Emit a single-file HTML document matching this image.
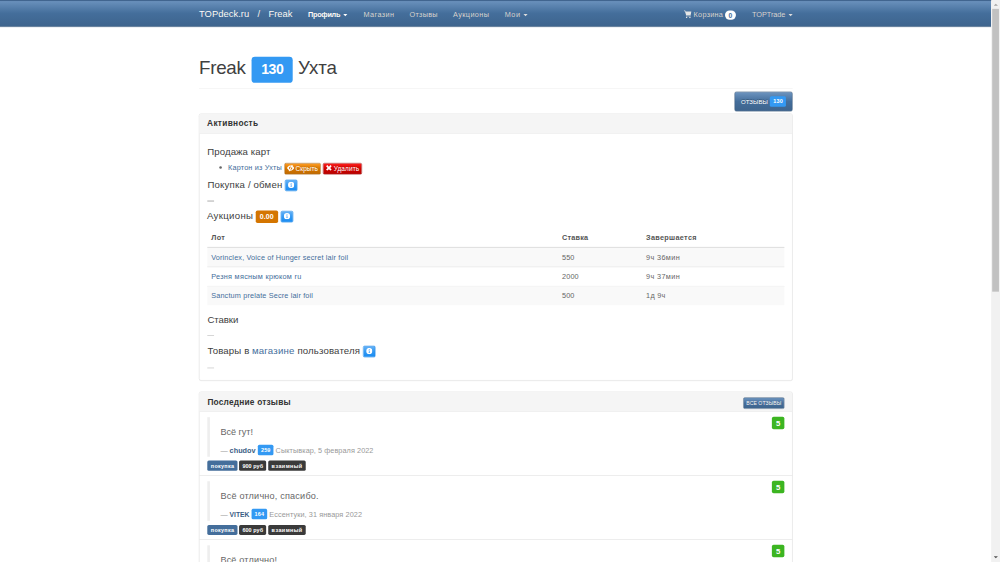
<!DOCTYPE html>
<html lang="ru"><head><meta charset="utf-8"><title>Freak - TOPdeck.ru</title>
<style>
html,body{margin:0;padding:0;background:#fff;}
body{width:1000px;height:562px;overflow:hidden;position:relative;font-family:"Liberation Sans",sans-serif;}
#stage{position:absolute;left:0;top:0;width:1920px;height:1080px;transform-origin:0 0;transform:scale(0.520833);overflow:hidden;background:#fff;}
#stage>div,#stage>svg,#stage>span{position:absolute;display:block;}
#stage>span{white-space:pre;line-height:1;font-family:"Liberation Sans",sans-serif;}
</style></head><body>
<div id="stage">
<div style="left:0.00px;top:0.00px;width:1903.00px;height:51.80px;background:linear-gradient(#6d94bf,#446e9b 50%,#3e648d);border-bottom:1px solid #345578;box-sizing:border-box;"></div>
<div style="left:-10.00px;top:-10.00px;width:1923.00px;height:11.70px;background:#41658f;"></div>
<div style="left:659.30px;top:27.00px;width:0;height:0;border-left:4px solid transparent;border-right:4px solid transparent;border-top:4px solid #fff;"></div>
<div style="left:1004.50px;top:27.00px;width:0;height:0;border-left:4px solid transparent;border-right:4px solid transparent;border-top:4px solid #ddd;"></div>
<div style="left:1513.50px;top:27.00px;width:0;height:0;border-left:4px solid transparent;border-right:4px solid transparent;border-top:4px solid #ddd;"></div>
<svg style="left:1312.5px;top:18.5px;width:15px;height:16.5px" viewBox="0 0 15 15" preserveAspectRatio="none"><path d="M0 1.2h2.6l.6 1.8H14.6l-1.6 6H4.2L2 2.4H0zM4 10h9.4v1.2H4z" fill="#e6e6e6"/><circle cx="5.3" cy="13.2" r="1.4" fill="#e6e6e6"/><circle cx="11.6" cy="13.2" r="1.4" fill="#e6e6e6"/></svg>
<div style="left:1392.00px;top:20.00px;width:21.00px;height:18.00px;background:#fff;border-radius:9px;"></div>
<div style="left:483.00px;top:109.00px;width:79.00px;height:50.00px;background:#3399f3;border-radius:6.5px;"></div>
<div style="left:381.50px;top:169.00px;width:1140.00px;height:1.00px;background:#eeeeee;"></div>
<div style="left:1410.00px;top:176.00px;width:112.00px;height:37.50px;background:linear-gradient(#6d94bf,#446e9b 50%,#3e648d);border:1px solid #345578;border-radius:4px;box-sizing:border-box;"></div>
<div style="left:1478.20px;top:184.50px;width:30.80px;height:20.00px;background:#3399f3;border-radius:3px;"></div>
<div style="left:381.50px;top:217.50px;width:1140.00px;height:513.50px;background:#fff;border:1px solid #dddddd;border-radius:4px;box-sizing:border-box;box-shadow:0 1px 1px rgba(0,0,0,.05);"></div>
<div style="left:382.50px;top:218.50px;width:1138.00px;height:37.00px;background:#f5f5f5;border-bottom:1px solid #dddddd;border-radius:3px 3px 0 0;"></div>
<div style="left:421.00px;top:319.30px;width:5.00px;height:5.00px;background:#666;border-radius:50%;"></div>
<div style="left:546.00px;top:313.00px;width:70.00px;height:21.50px;background:linear-gradient(#ff9c21,#d47500 50%,#c06a00);border:1px solid #a15900;border-radius:3px;box-sizing:border-box;"></div>
<svg style="left:551px;top:316px;width:14px;height:13.5px" viewBox="0 0 12 12" preserveAspectRatio="none"><path d="M0 6C2 2.6 4 1.6 6 1.6S10 2.6 12 6C10 9.4 8 10.4 6 10.4S2 9.4 0 6zM6 3.2a2.8 2.8 0 100 5.6 2.8 2.8 0 000-5.6z" fill="#fff" fill-rule="evenodd"/><path d="M8.2 0.4L9.6 1 4 11.6 2.6 11z" fill="#fff"/></svg>
<div style="left:620.00px;top:313.00px;width:75.00px;height:21.50px;background:linear-gradient(#ff1d1b,#cd0200 50%,#b90200);border:1px solid #9a0200;border-radius:3px;box-sizing:border-box;"></div>
<svg style="left:626px;top:317px;width:11px;height:11px" viewBox="0 0 10 10"><path d="M0 2.2L2.2 0 5 2.8 7.8 0 10 2.2 7.2 5 10 7.8 7.8 10 5 7.2 2.2 10 0 7.8 2.8 5z" fill="#fff"/></svg>
<div style="left:547.00px;top:344.50px;width:24.00px;height:22.50px;background:linear-gradient(#66b2f6,#3399f3 50%,#1a8cf2);border:1px solid #0e80e5;border-radius:3px;box-sizing:border-box;"></div>
<svg style="left:552.80px;top:348.70px;width:12px;height:12px" viewBox="0 0 12 12"><circle cx="6" cy="6" r="6" fill="#fff"/><rect x="5.2" y="2.4" width="1.7" height="1.6" fill="#5aa9f5"/><path d="M4.6 5h2.3v3.8h.7v.9H4.5v-.9h.8V5.9h-.7z" fill="#5aa9f5"/></svg>
<div style="left:398.00px;top:385.40px;width:13.00px;height:1.20px;background:#b0b0b0;"></div>
<div style="left:491.00px;top:404.20px;width:42.50px;height:23.60px;background:#d47500;border-radius:3.4px;"></div>
<div style="left:539.00px;top:404.50px;width:24.00px;height:22.50px;background:linear-gradient(#66b2f6,#3399f3 50%,#1a8cf2);border:1px solid #0e80e5;border-radius:3px;box-sizing:border-box;"></div>
<svg style="left:544.80px;top:408.70px;width:12px;height:12px" viewBox="0 0 12 12"><circle cx="6" cy="6" r="6" fill="#fff"/><rect x="5.2" y="2.4" width="1.7" height="1.6" fill="#5aa9f5"/><path d="M4.6 5h2.3v3.8h.7v.9H4.5v-.9h.8V5.9h-.7z" fill="#5aa9f5"/></svg>
<div style="left:398.00px;top:474.00px;width:1108.00px;height:2.00px;background:#dddddd;"></div>
<div style="left:398.00px;top:476.00px;width:1108.00px;height:36.00px;background:#f9f9f9;"></div>
<div style="left:398.00px;top:512.00px;width:1108.00px;height:1.00px;background:#dddddd;"></div>
<div style="left:398.00px;top:549.00px;width:1108.00px;height:1.00px;background:#dddddd;"></div>
<div style="left:398.00px;top:550.00px;width:1108.00px;height:36.00px;background:#f9f9f9;"></div>
<div style="left:398.00px;top:643.80px;width:13.00px;height:1.20px;background:#b0b0b0;"></div>
<div style="left:697.00px;top:663.50px;width:24.00px;height:22.50px;background:linear-gradient(#66b2f6,#3399f3 50%,#1a8cf2);border:1px solid #0e80e5;border-radius:3px;box-sizing:border-box;"></div>
<svg style="left:702.80px;top:667.70px;width:12px;height:12px" viewBox="0 0 12 12"><circle cx="6" cy="6" r="6" fill="#fff"/><rect x="5.2" y="2.4" width="1.7" height="1.6" fill="#5aa9f5"/><path d="M4.6 5h2.3v3.8h.7v.9H4.5v-.9h.8V5.9h-.7z" fill="#5aa9f5"/></svg>
<div style="left:398.00px;top:706.00px;width:13.00px;height:1.20px;background:#b0b0b0;"></div>
<div style="left:381.50px;top:751.50px;width:1140.00px;height:420.00px;background:#fff;border:1px solid #dddddd;border-radius:4px;box-sizing:border-box;box-shadow:0 1px 1px rgba(0,0,0,.05);"></div>
<div style="left:382.50px;top:752.50px;width:1138.00px;height:37.00px;background:#f5f5f5;border-bottom:1px solid #dddddd;border-radius:3px 3px 0 0;"></div>
<div style="left:1426.50px;top:763.00px;width:79.50px;height:22.00px;background:linear-gradient(#6d94bf,#446e9b 50%,#3e648d);border:1px solid #345578;border-radius:3px;box-sizing:border-box;"></div>
<div style="left:398.00px;top:800.60px;width:5.00px;height:76.80px;background:#eeeeee;"></div>
<div style="left:495.40px;top:853.60px;width:29.50px;height:20.00px;background:#3399f3;border-radius:3px;"></div>
<div style="left:398.20px;top:884.40px;width:57.60px;height:19.20px;background:#446e9b;border-radius:3px;"></div>
<div style="left:458.90px;top:884.40px;width:52.60px;height:19.20px;background:#3a3a3a;border-radius:3px;"></div>
<div style="left:515.00px;top:884.40px;width:71.80px;height:19.20px;background:#3a3a3a;border-radius:3px;"></div>
<div style="left:1481.80px;top:800.00px;width:24.20px;height:24.40px;background:#3cb521;border-radius:3.4px;"></div>
<div style="left:382.50px;top:911.80px;width:1138.00px;height:1.00px;background:#dddddd;"></div>
<div style="left:398.00px;top:923.70px;width:5.00px;height:76.80px;background:#eeeeee;"></div>
<div style="left:483.00px;top:976.70px;width:29.50px;height:20.00px;background:#3399f3;border-radius:3px;"></div>
<div style="left:398.20px;top:1007.50px;width:57.60px;height:19.20px;background:#446e9b;border-radius:3px;"></div>
<div style="left:458.90px;top:1007.50px;width:52.60px;height:19.20px;background:#3a3a3a;border-radius:3px;"></div>
<div style="left:515.00px;top:1007.50px;width:71.80px;height:19.20px;background:#3a3a3a;border-radius:3px;"></div>
<div style="left:1481.80px;top:923.10px;width:24.20px;height:24.40px;background:#3cb521;border-radius:3.4px;"></div>
<div style="left:382.50px;top:1034.70px;width:1138.00px;height:1.00px;background:#dddddd;"></div>
<div style="left:398.00px;top:1046.60px;width:5.00px;height:76.80px;background:#eeeeee;"></div>
<div style="left:485.00px;top:1099.60px;width:29.50px;height:20.00px;background:#3399f3;border-radius:3px;"></div>
<div style="left:398.20px;top:1130.40px;width:57.60px;height:19.20px;background:#446e9b;border-radius:3px;"></div>
<div style="left:458.90px;top:1130.40px;width:52.60px;height:19.20px;background:#3a3a3a;border-radius:3px;"></div>
<div style="left:515.00px;top:1130.40px;width:71.80px;height:19.20px;background:#3a3a3a;border-radius:3px;"></div>
<div style="left:1481.80px;top:1046.00px;width:24.20px;height:24.40px;background:#3cb521;border-radius:3.4px;"></div>
<div style="left:1903.00px;top:0.00px;width:17.00px;height:1080.00px;background:#f1f1f1;"></div>
<div style="left:1905.00px;top:17.00px;width:13.00px;height:543.00px;background:#c1c1c1;"></div>
<div style="left:1907.5px;top:7.2px;width:0;height:0;border-left:4px solid transparent;border-right:4px solid transparent;border-bottom:4.5px solid #a3a3a3;"></div>
<div style="left:1907.5px;top:1068.2px;width:0;height:0;border-left:4px solid transparent;border-right:4px solid transparent;border-top:4.5px solid #505050;"></div>
<span id="t0" style="left:382.00px;top:17.76px;font-size:18px;color:#fff;letter-spacing:0.087px;text-shadow:0 -1px 0 rgba(0,0,0,.3);">TOPdeck.ru</span>
<span id="t1" style="left:494.60px;top:17.76px;font-size:18px;color:#fff;text-shadow:0 -1px 0 rgba(0,0,0,.3);">/</span>
<span id="t2" style="left:515.70px;top:17.76px;font-size:18px;color:#fff;letter-spacing:-0.079px;text-shadow:0 -1px 0 rgba(0,0,0,.3);">Freak</span>
<span id="t3" style="left:591.40px;top:21.15px;font-size:14px;color:#fff;font-weight:700;letter-spacing:-0.555px;text-shadow:0 -1px 0 rgba(0,0,0,.3);">Профиль</span>
<span id="t4" style="left:698.00px;top:21.15px;font-size:14px;color:#dddddd;letter-spacing:0.747px;text-shadow:0 -1px 0 rgba(0,0,0,.3);">Магазин</span>
<span id="t5" style="left:786.40px;top:21.15px;font-size:14px;color:#dddddd;letter-spacing:0.501px;text-shadow:0 -1px 0 rgba(0,0,0,.3);">Отзывы</span>
<span id="t6" style="left:869.80px;top:21.15px;font-size:14px;color:#dddddd;letter-spacing:0.752px;text-shadow:0 -1px 0 rgba(0,0,0,.3);">Аукционы</span>
<span id="t7" style="left:969.00px;top:21.15px;font-size:14px;color:#dddddd;letter-spacing:0.981px;text-shadow:0 -1px 0 rgba(0,0,0,.3);">Мои</span>
<span id="t8" style="left:1331.70px;top:21.15px;font-size:14px;color:#dddddd;letter-spacing:0.495px;text-shadow:0 -1px 0 rgba(0,0,0,.3);">Корзина</span>
<span id="t9" style="left:1443.80px;top:21.15px;font-size:14px;color:#dddddd;letter-spacing:-0.056px;text-shadow:0 -1px 0 rgba(0,0,0,.3);">TOPTrade</span>
<span id="t10" style="left:1398.90px;top:22.60px;font-size:13px;color:#446e9b;font-weight:700;">0</span>
<span id="t11" style="left:382.00px;top:112.83px;font-size:36px;color:#404040;letter-spacing:-0.508px;">Freak</span>
<span id="t12" style="left:501.60px;top:121.14px;font-size:27px;color:#fff;font-weight:700;letter-spacing:-0.931px;">130</span>
<span id="t13" style="left:572.20px;top:112.83px;font-size:36px;color:#404040;letter-spacing:-0.018px;">Ухта</span>
<span id="t14" style="left:1422.70px;top:189.97px;font-size:11.5px;color:#fff;letter-spacing:0.134px;text-shadow:0 -1px 0 rgba(0,0,0,.3);">ОТЗЫВЫ</span>
<span id="t15" style="left:1484.50px;top:188.31px;font-size:10.5px;color:#fff;font-weight:700;letter-spacing:0.484px;">130</span>
<span id="t16" style="left:397.60px;top:229.06px;font-size:16px;color:#333333;font-weight:700;letter-spacing:0.569px;">Активность</span>
<span id="t17" style="left:398.00px;top:282.14px;font-size:18.5px;color:#404040;letter-spacing:0.135px;">Продажа карт</span>
<span id="t18" style="left:437.80px;top:313.95px;font-size:14px;color:#446e9b;letter-spacing:0.323px;">Картон из Ухты</span>
<span id="t19" style="left:567.40px;top:317.62px;font-size:12.5px;color:#fff;letter-spacing:0.066px;text-shadow:0 -1px 0 rgba(0,0,0,.12);">Скрыть</span>
<span id="t20" style="left:640.90px;top:317.62px;font-size:12.5px;color:#fff;letter-spacing:0.144px;text-shadow:0 -1px 0 rgba(0,0,0,.12);">Удалить</span>
<span id="t21" style="left:398.40px;top:346.14px;font-size:18.5px;color:#404040;letter-spacing:0.316px;">Покупка / обмен</span>
<span id="t22" style="left:397.40px;top:404.74px;font-size:18.5px;color:#404040;letter-spacing:0.597px;">Аукционы</span>
<span id="t23" style="left:498.80px;top:409.77px;font-size:13.5px;color:#fff;font-weight:700;letter-spacing:0.173px;">0.00</span>
<span id="t24" style="left:405.50px;top:448.25px;font-size:14px;color:#555555;font-weight:700;letter-spacing:0.705px;">Лот</span>
<span id="t25" style="left:1079.20px;top:448.25px;font-size:14px;color:#555555;font-weight:700;letter-spacing:0.369px;">Ставка</span>
<span id="t26" style="left:1240.50px;top:448.25px;font-size:14px;color:#555555;font-weight:700;letter-spacing:0.580px;">Завершается</span>
<span id="t27" style="left:405.50px;top:486.55px;font-size:14px;color:#446e9b;letter-spacing:0.289px;">Vorinclex, Voice of Hunger secret lair foil</span>
<span id="t28" style="left:1079.20px;top:486.55px;font-size:14px;color:#666666;letter-spacing:0.120px;">550</span>
<span id="t29" style="left:1240.50px;top:486.55px;font-size:14px;color:#666666;letter-spacing:0.683px;">9ч 36мин</span>
<span id="t30" style="left:405.50px;top:523.15px;font-size:14px;color:#446e9b;letter-spacing:0.525px;">Резня мясным крюком ru</span>
<span id="t31" style="left:1079.20px;top:523.15px;font-size:14px;color:#666666;letter-spacing:0.181px;">2000</span>
<span id="t32" style="left:1240.50px;top:523.15px;font-size:14px;color:#666666;letter-spacing:0.683px;">9ч 37мин</span>
<span id="t33" style="left:405.50px;top:559.95px;font-size:14px;color:#446e9b;letter-spacing:0.284px;">Sanctum prelate Secre lair foil</span>
<span id="t34" style="left:1079.20px;top:559.95px;font-size:14px;color:#666666;letter-spacing:0.120px;">500</span>
<span id="t35" style="left:1240.50px;top:559.95px;font-size:14px;color:#666666;letter-spacing:0.516px;">1д 9ч</span>
<span id="t36" style="left:398.20px;top:606.34px;font-size:18.5px;color:#404040;letter-spacing:-0.134px;">Ставки</span>
<span id="t37" style="left:398.20px;top:664.04px;font-size:18.5px;color:#404040;letter-spacing:0.284px;">Товары в</span>
<span id="t38" style="left:483.80px;top:664.04px;font-size:18.5px;color:#446e9b;letter-spacing:0.376px;">магазине</span>
<span id="t39" style="left:571.00px;top:664.04px;font-size:18.5px;color:#404040;letter-spacing:0.277px;">пользователя</span>
<span id="t40" style="left:398.20px;top:764.26px;font-size:16px;color:#333333;font-weight:700;letter-spacing:0.371px;">Последние отзывы</span>
<span id="t41" style="left:1433.00px;top:769.70px;font-size:9.8px;color:#fff;letter-spacing:0.128px;text-shadow:0 -1px 0 rgba(0,0,0,.3);">ВСЕ ОТЗЫВЫ</span>
<span id="t42" style="left:423.20px;top:821.59px;font-size:17.5px;color:#666666;letter-spacing:-0.062px;">Всё гут!</span>
<span id="t43" style="left:423.20px;top:856.75px;font-size:14px;color:#999999;letter-spacing:-1.000px;">—</span>
<span id="t44" style="left:440.80px;top:856.75px;font-size:14px;color:#3a5d84;font-weight:700;letter-spacing:0.044px;">chudov</span>
<span id="t45" style="left:501.20px;top:858.71px;font-size:10.5px;color:#fff;font-weight:700;letter-spacing:0.234px;">259</span>
<span id="t46" style="left:529.20px;top:856.75px;font-size:14px;color:#999999;letter-spacing:0.119px;">Сыктывкар, 5 февраля 2022</span>
<span id="t47" style="left:404.80px;top:888.81px;font-size:10.5px;color:#fff;font-weight:700;letter-spacing:0.534px;">покупка</span>
<span id="t48" style="left:465.40px;top:888.81px;font-size:10.5px;color:#fff;font-weight:700;letter-spacing:0.092px;">900 руб</span>
<span id="t49" style="left:521.50px;top:888.81px;font-size:10.5px;color:#fff;font-weight:700;letter-spacing:0.775px;">взаимный</span>
<span id="t50" style="left:1489.80px;top:804.50px;font-size:15px;color:#fff;font-weight:700;">5</span>
<span id="t51" style="left:423.20px;top:944.69px;font-size:17.5px;color:#666666;letter-spacing:0.359px;">Всё отлично, спасибо.</span>
<span id="t52" style="left:423.20px;top:979.85px;font-size:14px;color:#999999;letter-spacing:-1.000px;">—</span>
<span id="t53" style="left:440.80px;top:980.70px;font-size:13px;color:#3a5d84;font-weight:700;letter-spacing:-0.074px;">VITEK</span>
<span id="t54" style="left:488.80px;top:981.81px;font-size:10.5px;color:#fff;font-weight:700;letter-spacing:0.234px;">164</span>
<span id="t55" style="left:517.20px;top:979.85px;font-size:14px;color:#999999;letter-spacing:0.155px;">Ессентуки, 31 января 2022</span>
<span id="t56" style="left:404.80px;top:1011.91px;font-size:10.5px;color:#fff;font-weight:700;letter-spacing:0.534px;">покупка</span>
<span id="t57" style="left:465.40px;top:1011.91px;font-size:10.5px;color:#fff;font-weight:700;letter-spacing:0.092px;">600 руб</span>
<span id="t58" style="left:521.50px;top:1011.91px;font-size:10.5px;color:#fff;font-weight:700;letter-spacing:0.775px;">взаимный</span>
<span id="t59" style="left:1489.80px;top:927.60px;font-size:15px;color:#fff;font-weight:700;">5</span>
<span id="t60" style="left:423.20px;top:1066.59px;font-size:17.5px;color:#666666;letter-spacing:0.304px;">Всё отлично!</span>
<span id="t61" style="left:423.20px;top:1102.75px;font-size:14px;color:#999999;letter-spacing:-1.000px;">—</span>
<span id="t62" style="left:440.80px;top:1102.75px;font-size:14px;color:#3a5d84;font-weight:700;letter-spacing:3.474px;">user</span>
<span id="t63" style="left:490.80px;top:1104.71px;font-size:10.5px;color:#fff;font-weight:700;letter-spacing:0.234px;">100</span>
<span id="t64" style="left:519.00px;top:1102.75px;font-size:14px;color:#999999;letter-spacing:0.634px;">Город, 1 января 2022</span>
<span id="t65" style="left:404.80px;top:1134.81px;font-size:10.5px;color:#fff;font-weight:700;letter-spacing:0.534px;">покупка</span>
<span id="t66" style="left:465.40px;top:1134.81px;font-size:10.5px;color:#fff;font-weight:700;letter-spacing:0.092px;">500 руб</span>
<span id="t67" style="left:521.50px;top:1134.81px;font-size:10.5px;color:#fff;font-weight:700;letter-spacing:0.775px;">взаимный</span>
<span id="t68" style="left:1489.80px;top:1050.50px;font-size:15px;color:#fff;font-weight:700;">5</span>
</div>
</body></html>
